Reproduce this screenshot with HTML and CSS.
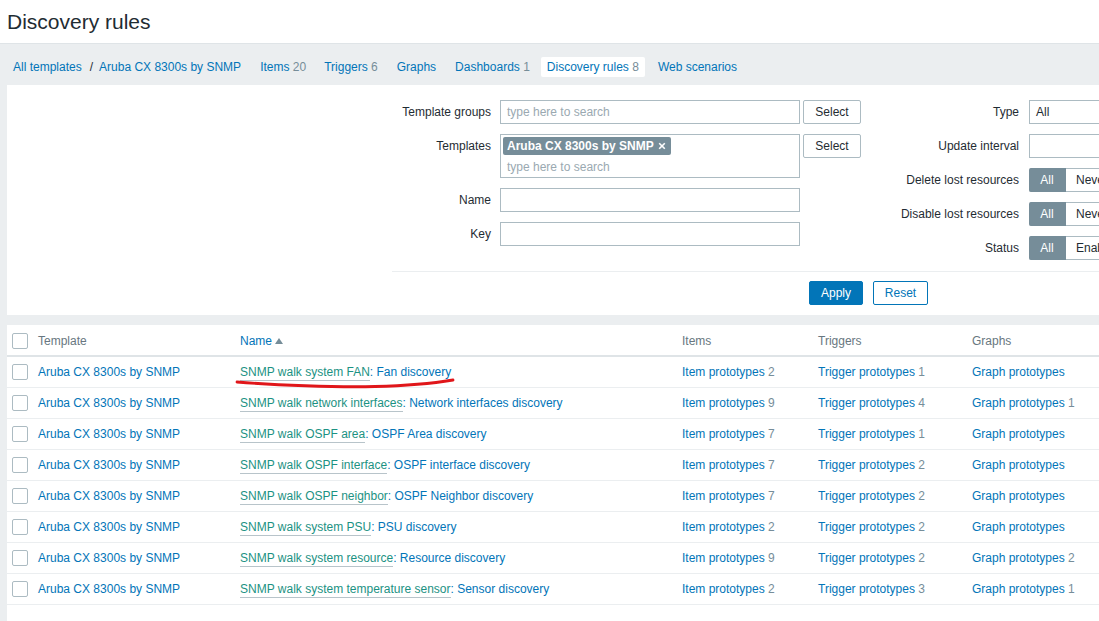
FILE: index.html
```html
<!DOCTYPE html>
<html>
<head>
<meta charset="utf-8">
<link rel="stylesheet" href="styles.css">
</head>
<body>
<div class="page">
  <header class="header"><h1>Discovery rules</h1></header>
  <main class="main">
    <nav class="nav">
      <a class="nav-link">All templates</a>
      <span class="slash">/</span>
      <a class="nav-link crumb">Aruba CX 8300s by SNMP</a>
      <a class="nav-link tab">Items <span class="cnt">20</span></a>
      <a class="nav-link tab wide">Triggers <span class="cnt">6</span></a>
      <a class="nav-link tab wide">Graphs</a>
      <a class="nav-link tab">Dashboards <span class="cnt">1</span></a>
      <a class="nav-link tab active">Discovery rules <span class="cnt">8</span></a>
      <a class="nav-link tab">Web scenarios</a>
    </nav>

    <section class="filter">
      <div class="filter-cols">
        <div class="fcol left">
          <div class="frow">
            <label class="flabel">Template groups</label>
            <div class="finput ph">type here to search</div>
            <button class="btn-select">Select</button>
          </div>
          <div class="frow tall">
            <label class="flabel">Templates</label>
            <div class="finput multi">
              <span class="tag">Aruba CX 8300s by SNMP <svg class="x" viewBox="0 0 10 10" width="8" height="8"><path d="M1.5 1.5 L8.5 8.5 M8.5 1.5 L1.5 8.5" stroke="#fff" stroke-width="2"/></svg></span>
              <span class="ph2">type here to search</span>
            </div>
            <button class="btn-select">Select</button>
          </div>
          <div class="frow">
            <label class="flabel">Name</label>
            <div class="finput"></div>
          </div>
          <div class="frow">
            <label class="flabel">Key</label>
            <div class="finput"></div>
          </div>
        </div>
        <div class="fcol right">
          <div class="frow">
            <label class="flabel r">Type</label>
            <div class="finput wide">All</div>
          </div>
          <div class="frow">
            <label class="flabel r">Update interval</label>
            <div class="finput wide"></div>
          </div>
          <div class="frow">
            <label class="flabel r">Delete lost resources</label>
            <div class="radio"><span class="opt on">All</span><span class="opt">Never</span></div>
          </div>
          <div class="frow">
            <label class="flabel r">Disable lost resources</label>
            <div class="radio"><span class="opt on">All</span><span class="opt">Never</span></div>
          </div>
          <div class="frow">
            <label class="flabel r">Status</label>
            <div class="radio"><span class="opt on">All</span><span class="opt">Enabled</span></div>
          </div>
        </div>
      </div>
      <div class="filter-sep"></div>
      <div class="filter-btns">
        <button class="btn-apply">Apply</button>
        <button class="btn-reset">Reset</button>
      </div>
    </section>

    <section class="list">
      <table class="tbl">
        <colgroup>
          <col class="c1"><col class="c2"><col class="c3"><col class="c4"><col class="c5"><col class="c6">
        </colgroup>
        <thead>
          <tr>
            <th><span class="cb"></span></th>
            <th>Template</th>
            <th><a class="sort">Name</a><span class="arrow"></span></th>
            <th>Items</th>
            <th>Triggers</th>
            <th>Graphs</th>
          </tr>
        </thead>
        <tbody>
          <tr>
            <td><span class="cb"></span></td>
            <td><a class="lnk">Aruba CX 8300s by SNMP</a></td>
            <td><a class="teal">SNMP walk system FAN</a><a class="lnk">: Fan discovery</a></td>
            <td><a class="lnk">Item prototypes</a> <span class="cnt">2</span></td>
            <td><a class="lnk">Trigger prototypes</a> <span class="cnt">1</span></td>
            <td><a class="lnk">Graph prototypes</a></td>
          </tr>
          <tr>
            <td><span class="cb"></span></td>
            <td><a class="lnk">Aruba CX 8300s by SNMP</a></td>
            <td><a class="teal">SNMP walk network interfaces</a><a class="lnk">: Network interfaces discovery</a></td>
            <td><a class="lnk">Item prototypes</a> <span class="cnt">9</span></td>
            <td><a class="lnk">Trigger prototypes</a> <span class="cnt">4</span></td>
            <td><a class="lnk">Graph prototypes</a> <span class="cnt">1</span></td>
          </tr>
          <tr>
            <td><span class="cb"></span></td>
            <td><a class="lnk">Aruba CX 8300s by SNMP</a></td>
            <td><a class="teal">SNMP walk OSPF area</a><a class="lnk">: OSPF Area discovery</a></td>
            <td><a class="lnk">Item prototypes</a> <span class="cnt">7</span></td>
            <td><a class="lnk">Trigger prototypes</a> <span class="cnt">1</span></td>
            <td><a class="lnk">Graph prototypes</a></td>
          </tr>
          <tr>
            <td><span class="cb"></span></td>
            <td><a class="lnk">Aruba CX 8300s by SNMP</a></td>
            <td><a class="teal">SNMP walk OSPF interface</a><a class="lnk">: OSPF interface discovery</a></td>
            <td><a class="lnk">Item prototypes</a> <span class="cnt">7</span></td>
            <td><a class="lnk">Trigger prototypes</a> <span class="cnt">2</span></td>
            <td><a class="lnk">Graph prototypes</a></td>
          </tr>
          <tr>
            <td><span class="cb"></span></td>
            <td><a class="lnk">Aruba CX 8300s by SNMP</a></td>
            <td><a class="teal">SNMP walk OSPF neighbor</a><a class="lnk">: OSPF Neighbor discovery</a></td>
            <td><a class="lnk">Item prototypes</a> <span class="cnt">7</span></td>
            <td><a class="lnk">Trigger prototypes</a> <span class="cnt">2</span></td>
            <td><a class="lnk">Graph prototypes</a></td>
          </tr>
          <tr>
            <td><span class="cb"></span></td>
            <td><a class="lnk">Aruba CX 8300s by SNMP</a></td>
            <td><a class="teal">SNMP walk system PSU</a><a class="lnk">: PSU discovery</a></td>
            <td><a class="lnk">Item prototypes</a> <span class="cnt">2</span></td>
            <td><a class="lnk">Trigger prototypes</a> <span class="cnt">2</span></td>
            <td><a class="lnk">Graph prototypes</a></td>
          </tr>
          <tr>
            <td><span class="cb"></span></td>
            <td><a class="lnk">Aruba CX 8300s by SNMP</a></td>
            <td><a class="teal">SNMP walk system resource</a><a class="lnk">: Resource discovery</a></td>
            <td><a class="lnk">Item prototypes</a> <span class="cnt">9</span></td>
            <td><a class="lnk">Trigger prototypes</a> <span class="cnt">2</span></td>
            <td><a class="lnk">Graph prototypes</a> <span class="cnt">2</span></td>
          </tr>
          <tr>
            <td><span class="cb"></span></td>
            <td><a class="lnk">Aruba CX 8300s by SNMP</a></td>
            <td><a class="teal">SNMP walk system temperature sensor</a><a class="lnk">: Sensor discovery</a></td>
            <td><a class="lnk">Item prototypes</a> <span class="cnt">2</span></td>
            <td><a class="lnk">Trigger prototypes</a> <span class="cnt">3</span></td>
            <td><a class="lnk">Graph prototypes</a> <span class="cnt">1</span></td>
          </tr>
        </tbody>
      </table>
    </section>
  </main>
  <svg class="scribble" width="230" height="16" viewBox="0 0 230 16">
    <path d="M2 6 C 40 9, 100 11.5, 140 10.5 S 200 7, 218 4" fill="none" stroke="#e0161a" stroke-width="2.8" stroke-linecap="round"/>
  </svg>
</div>
</body>
</html>
```

FILE: styles.css
```css
html, body {
  margin: 0;
  padding: 0;
  overflow: hidden;
  background: #ebeef0;
}
body {
  font-family: "Liberation Sans", Arial, sans-serif;
  font-size: 12px;
  color: #1f2c33;
}
.page {
  position: relative;
  width: 1260px;
  height: 621px;
  background: #ebeef0;
}
.header {
  height: 43px;
  background: #fff;
  border-bottom: 1px solid #dfe4e7;
  display: flex;
  align-items: center;
  padding-left: 7px;
}
.header h1 {
  margin: 0;
  font-size: 21px;
  font-weight: normal;
  color: #1f2c33;
  line-height: 24px;
}
.main {
  padding-left: 7px;
}
.nav {
  display: flex;
  align-items: center;
  height: 41px;
  padding-top: 5px;
  box-sizing: border-box;
}
.nav-link {
  color: #0275b8;
  white-space: nowrap;
  line-height: 20px;
}
.nav .nav-link:first-child {
  margin-left: 6px;
}
.slash {
  margin: 0 6px 0 8px;
  color: #1f2c33;
}
.crumb { margin-right: 12px; }
.tab {
  padding: 0 7px;
  margin-right: 4px;
}
.tab.wide { margin-right: 5px; }
.tab.active {
  background: #fff;
  border-radius: 2px;
  padding: 0 6px;
  margin-right: 6px;
}
.cnt { color: #768d99; }

.filter {
  background: #fff;
  height: 230px;
  box-sizing: border-box;
  padding-top: 15px;
  margin-bottom: 10px;
}
.filter-cols {
  display: flex;
  margin-left: 385px;
}
.fcol {
  display: flex;
  flex-direction: column;
  gap: 10px;
}
.fcol.left { width: 479px; }
.frow {
  display: flex;
  align-items: flex-start;
  min-height: 24px;
}
.flabel {
  width: 99px;
  text-align: right;
  margin-right: 9px;
  line-height: 24px;
  white-space: nowrap;
}
.flabel.r {
  width: 148px;
  margin-right: 10px;
}
.finput {
  width: 300px;
  height: 24px;
  box-sizing: border-box;
  border: 1px solid #acbbc2;
  padding: 0 6px;
  line-height: 22px;
  background: #fff;
}
.finput.wide { width: 200px; }
.ph { color: #9aa9b1; }
.finput.multi {
  height: 44px;
  padding: 2px 2px 0;
  line-height: normal;
}
.tag {
  display: inline-flex;
  align-items: center;
  gap: 4px;
  background: #768d99;
  color: #fff;
  font-weight: bold;
  height: 18px;
  padding: 0 5px 0 4px;
  border-radius: 2px;
  line-height: 18px;
}
.tag .x { display: block; }
.ph2 {
  display: block;
  color: #9aa9b1;
  padding-left: 4px;
  line-height: 24px;
}
.btn-select {
  margin-left: 3px;
  width: 58px;
  height: 24px;
  border: 1px solid #acbbc2;
  background: #fff;
  border-radius: 2px;
  font-family: inherit;
  font-size: 12px;
  color: #1f2c33;
  padding: 0;
}
.radio {
  display: flex;
  height: 24px;
}
.opt {
  box-sizing: border-box;
  height: 24px;
  line-height: 22px;
  padding: 0 10px;
  border: 1px solid #acbbc2;
  border-left: 0;
  background: #fff;
  width: 80px;
}
.opt.on {
  width: 37px;
  background: #768d99;
  border-color: #768d99;
  color: #fff;
  border-radius: 2px 0 0 2px;
  text-align: center;
  padding: 0;
}
.filter-sep {
  margin: 11px 0 0 385px;
  border-top: 1px solid #ebeef0;
}
.filter-btns {
  display: flex;
  gap: 10px;
  margin: 9px 0 0 802px;
}
.btn-apply, .btn-reset {
  height: 24px;
  font-family: inherit;
  font-size: 12px;
  border-radius: 2px;
  padding: 0;
}
.btn-apply {
  width: 54px;
  background: #0275b8;
  color: #fff;
  border: 1px solid #0275b8;
}
.btn-reset {
  width: 55px;
  background: #fff;
  color: #0275b8;
  border: 1px solid #0275b8;
}

.list {
  background: #fff;
  height: 300px;
}
.tbl {
  border-collapse: collapse;
  table-layout: fixed;
  width: 1253px;
}
.c1 { width: 31px; }
.c2 { width: 202px; }
.c3 { width: 442px; }
.c4 { width: 136px; }
.c5 { width: 154px; }
.c6 { width: 288px; }
.tbl th {
  text-align: left;
  font-weight: normal;
  color: #687780;
  height: 29px;
  padding: 1px 0 0;
  border-bottom: 2px solid #dfe4e7;
  white-space: nowrap;
}
.tbl td {
  height: 30px;
  padding: 0;
  border-bottom: 1px solid #ebeef0;
  white-space: nowrap;
}
.tbl th:first-child, .tbl td:first-child {
  padding-left: 5px;
}
.cb {
  display: block;
  width: 16px;
  height: 16px;
  box-sizing: border-box;
  border: 1px solid #acbbc2;
  border-radius: 2px;
  background: #fff;
}
.sort { color: #0275b8; }
.arrow {
  display: inline-block;
  width: 0;
  height: 0;
  border-left: 4px solid transparent;
  border-right: 4px solid transparent;
  border-bottom: 6px solid #768d99;
  margin-left: 3px;
  vertical-align: 1px;
}
.lnk { color: #0275b8; }
.teal {
  color: #1c9283;
  border-bottom: 1px solid #b8c4ca;
  padding-bottom: 1px;
}
.scribble {
  position: absolute;
  left: 235px;
  top: 376px;
}
```
